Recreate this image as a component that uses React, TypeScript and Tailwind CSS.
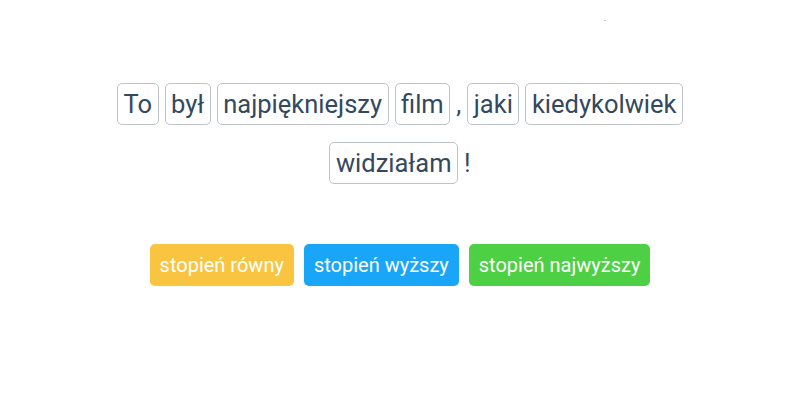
import React from "react";

type Token = { text: string; word: boolean };

const sentence: Token[] = [
  { text: "To", word: true },
  { text: "był", word: true },
  { text: "najpiękniejszy", word: true },
  { text: "film", word: true },
  { text: ",", word: false },
  { text: "jaki", word: true },
  { text: "kiedykolwiek", word: true },
  { text: "widziałam", word: true },
  { text: "!", word: false },
];

const buttons = [
  { label: "stopień równy", cls: "bg-[#f9c540]" },
  { label: "stopień wyższy", cls: "bg-[#19a6f9]" },
  { label: "stopień najwyższy", cls: "bg-[#4dd043]" },
];

export default function App() {
  return (
    <div
      className="relative w-[800px] h-[400px] bg-white flex flex-col items-center"
      style={{ fontFamily: "Roboto, 'Liberation Sans', sans-serif" }}
    >
      <div className="absolute left-[604px] top-[20px] w-[2px] h-[1px] bg-[#c8c8c8]" />
      <div className="mt-[83px] w-[620px] flex flex-wrap justify-center items-center gap-x-[6px] gap-y-[17px] text-[25.5px] leading-[28px] text-[#34495e]">
        {sentence.map((t, i) =>
          t.word ? (
            <span
              key={i}
              className="border border-[#bdc3c7] rounded-[5px] px-[5.5px] py-[6px]"
            >
              {t.text}
            </span>
          ) : (
            <span key={i}>{t.text}</span>
          )
        )}
      </div>
      <div className="mt-[60px] flex gap-[10px]">
        {buttons.map((b) => (
          <button
            key={b.label}
            className={`${b.cls} text-white text-[20px] leading-[22px] px-[10px] h-[42px] rounded-[5px]`}
          >
            {b.label}
          </button>
        ))}
      </div>
    </div>
  );
}
